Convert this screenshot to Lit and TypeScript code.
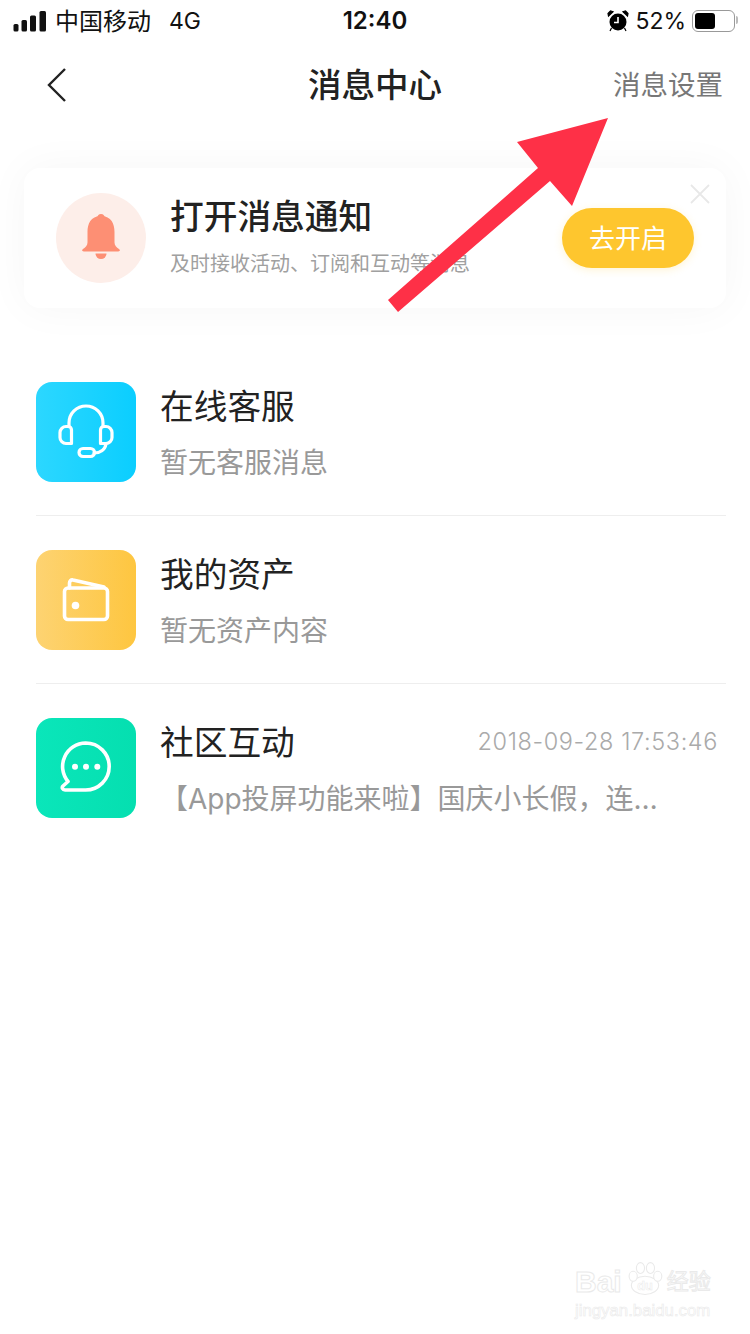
import { css, html, LitElement, svg } from 'lit';
import { customElement } from 'lit/decorators.js';

const headset = svg`
  <g fill="none" stroke="#fff" stroke-width="3.200" stroke-linecap="round" stroke-linejoin="round">
    <path d="M33 44v-3a17 17 0 0 1 34 0v3" />
    <path d="M32 44.500h-2a6 6 0 0 0-6 6v5a6 6 0 0 0 6 6h5.500V48c0-2-1.500-3.500-3.500-3.500z" />
    <path d="M68 44.500h2a6 6 0 0 1 6 6v5a6 6 0 0 1-6 6h-5.500V48c0-2 1.500-3.500 3.500-3.500z" />
    <path d="M58 71c6 0 11-3 12-9" />
    <rect x="43" y="66.500" width="15.500" height="8" rx="4" />
  </g>`;

const wallet = svg`
  <g fill="none" stroke="#fff" stroke-width="3.600" stroke-linecap="round" stroke-linejoin="round">
    <rect x="28.500" y="38" width="43" height="31.500" rx="3.500" />
    <path d="M33.500 38v-5c0-2 1.500-3.500 3.500-3l31 7" />
  </g>
  <circle cx="39.500" cy="55.500" r="3.800" fill="#fff" />`;

const chat = svg`
  <path d="M49.700 25a23.500 23.500 0 0 1 0 47H29c-2.500 0-3.500-2.500-2-4l5-4.500A23.500 23.500 0 0 1 49.700 25z"
    fill="none" stroke="#fff" stroke-width="3.600" stroke-linejoin="round" />
  <circle cx="39" cy="48.700" r="3" fill="#fff" />
  <circle cx="50" cy="48.700" r="3" fill="#fff" />
  <circle cx="61.300" cy="48.700" r="3" fill="#fff" />`;

const rows = [
  { tile: 'blue', icon: headset, title: '在线客服', sub: '暂无客服消息', date: '' },
  { tile: 'yellow', icon: wallet, title: '我的资产', sub: '暂无资产内容', date: '' },
  { tile: 'green', icon: chat, title: '社区互动', sub: '【App投屏功能来啦】国庆小长假，连…', date: '2018-09-28 17:53:46' },
];

@customElement('app-root')
export class AppRoot extends LitElement {
  static override styles = css`
    :host {
      display: block;
      position: relative;
      width: 750px;
      height: 1334px;
      overflow: hidden;
      background: #fff;
      color: #222;
      font-family: Inter, 'Noto Sans CJK SC', sans-serif;
    }
    .status {
      display: grid;
      grid-template-columns: 1fr auto 1fr;
      align-items: center;
      height: 41px;
      padding: 0 13px;
      font-size: 24px;
      color: #111;
    }
    .status-left, .status-right {
      display: flex;
      align-items: center;
    }
    .status-right {
      justify-content: flex-end;
      padding-right: 2px;
    }
    .signal { margin-right: 9px; }
    .carrier { margin-top: -2px; }
    .net { margin-left: 18px; font-size: 23px; }
    .time { font-weight: 600; font-size: 24px; }
    .alarm { margin-right: 6px; }
    .percent { font-size: 23px; }
    .battery {
      box-sizing: border-box;
      width: 43px;
      height: 22px;
      margin-left: 6px;
      padding: 2px;
      border: 1.5px solid #999;
      border-radius: 6px;
      position: relative;
    }
    .battery::after {
      content: '';
      position: absolute;
      right: -4px;
      top: 5px;
      width: 2px;
      height: 8px;
      border-radius: 0 2px 2px 0;
      background: #bbb;
    }
    .battery-fill {
      width: 20px;
      height: 100%;
      border-radius: 3px;
      background: #000;
    }
    .nav {
      display: grid;
      grid-template-columns: 1fr auto 1fr;
      align-items: center;
      height: 87px;
      padding: 0 27px;
    }
    .back { display: block; margin-left: 19px; }
    .nav-title { margin-bottom: 4px; font-size: 33.500px; font-weight: 500; }
    .nav-action { margin-bottom: 4px; justify-self: end; font-size: 27.500px; color: #777; }
    .card {
      display: flex;
      align-items: center;
      position: relative;
      height: 140px;
      margin: 40px 24px 0;
      padding: 0 32px;
      border-radius: 16px;
      background: #fff;
      box-shadow: 0 0 44px rgba(0, 0, 0, 0.04);
    }
    .bell {
      display: flex;
      align-items: center;
      justify-content: center;
      flex: none;
      width: 90px;
      height: 90px;
      border-radius: 50%;
      background: #fdeee9;
    }
    .card-text { flex: 1; margin-left: 24px; padding-bottom: 6px; }
    .card-title { font-size: 33.700px; font-weight: 500; line-height: 48px; }
    .card-sub { margin-top: 9px; font-size: 20px; line-height: 28px; color: #a0a0a0; }
    .open {
      flex: none;
      width: 132px;
      height: 60px;
      border-radius: 30px;
      background: #fec62e;
      box-shadow: 0 2px 8px rgba(254, 198, 46, 0.2);
      color: #fff;
      font-size: 26px;
      line-height: 62px;
      text-align: center;
    }
    .close { position: absolute; top: 15px; right: 15px; }
    .list { margin: 40px 24px 0 36px; }
    .row {
      display: flex;
      height: 100px;
      padding: 34px 0 33px;
      border-bottom: 1px solid #eee;
    }
    .row:last-child { border-bottom: none; }
    .tile {
      flex: none;
      width: 100px;
      height: 100px;
      border-radius: 16px;
    }
    .tile svg { display: block; }
    .blue { background: linear-gradient(90deg, #2cd7ff, #0bceff); }
    .yellow { background: linear-gradient(90deg, #fdd372, #fec640); }
    .green { background: linear-gradient(90deg, #0ae6ba, #05dfb0); }
    .row-body { flex: 1; min-width: 0; margin: -3px 0 0 24px; padding-right: 8px; }
    .row-top {
      display: flex;
      align-items: center;
      justify-content: space-between;
      height: 50px;
    }
    .row-title { font-size: 33.700px; }
    .row-date { margin-top: 2px; font-size: 23.500px; font-weight: 300; letter-spacing: 0.6px; color: #aaa; }
    .row-sub { margin-top: 12px; font-size: 28px; line-height: 44px; color: #999; white-space: nowrap; }
    .arrow { position: absolute; left: 0; top: 0; }
    .mark {
      position: absolute;
      left: 575px;
      top: 1260px;
      width: 140px;
      color: #fff;
      font-family: 'Liberation Sans', 'Noto Sans CJK SC', sans-serif;
      -webkit-text-stroke: 1px #eaeaea;
    }
    .mark-top {
      display: flex;
      align-items: flex-end;
      height: 38px;
      font-size: 30px;
      font-weight: 700;
      line-height: 32px;
    }
    .mark-paw { flex: none; margin-left: 3px; }
    .mark-cn { font-size: 22px; font-weight: 400; margin-left: 2px; }
    .mark-url {
      margin-top: 4px;
      font-size: 16.800px;
      line-height: 18px;
      white-space: nowrap;
      -webkit-text-stroke: 0.6px #eaeaea;
    }
  `;

  override render() {
    return html`
      <div class="status">
        <div class="status-left">
          <svg class="signal" width="33" height="22" viewBox="0 0 33 22" fill="#111">
            <rect x="0.500" y="14" width="5" height="7.500" rx="1.500" />
            <rect x="8.500" y="10" width="5.500" height="11.500" rx="1.500" />
            <rect x="17" y="5.500" width="6" height="16" rx="1.500" />
            <rect x="26.500" y="1" width="6.500" height="20.500" rx="1.500" />
          </svg>
          <span class="carrier">中国移动</span>
          <span class="net">4G</span>
        </div>
        <div class="time">12:40</div>
        <div class="status-right">
          <svg class="alarm" width="22" height="22" viewBox="0 0 22 22">
            <circle cx="11" cy="12" r="8.500" fill="#000" />
            <path d="M11 7v5.500H7" fill="none" stroke="#fff" stroke-width="1.600" />
            <path d="M1.500 6 6 1.800 3.500 1 1 3.500zM20.500 6 16 1.800 18.500 1 21 3.500zM4.500 18 3 21M17.500 18 19 21" fill="#000" stroke="#000" stroke-width="1.200" />
          </svg>
          <span class="percent">52%</span>
          <div class="battery"><div class="battery-fill"></div></div>
        </div>
      </div>

      <div class="nav">
        <svg class="back" width="24" height="36" viewBox="0 0 24 36" fill="none" stroke="#222" stroke-width="2.400">
          <path d="M19 2 3 18l16 16" />
        </svg>
        <div class="nav-title">消息中心</div>
        <div class="nav-action">消息设置</div>
      </div>

      <div class="card">
        <div class="bell">
          <svg width="38" height="48" viewBox="0 0 38 48" fill="#fd8f74">
            <circle cx="19" cy="3.500" r="3.500" />
            <path d="M19 2C8.500 2 5.500 10 5.500 18v10.500c0 3-2 5-4.500 6.500-1.500 1-1 2.500.8 2.500h34.400c1.800 0 2.300-1.500.8-2.500-2.500-1.500-4.500-3.500-4.500-6.500V18C32.500 10 29.500 2 19 2z" />
            <path d="M13.500 39.500h11a5.500 5.500 0 0 1-11 0z" />
          </svg>
        </div>
        <div class="card-text">
          <div class="card-title">打开消息通知</div>
          <div class="card-sub">及时接收活动、订阅和互动等消息</div>
        </div>
        <div class="open">去开启</div>
        <svg class="close" width="22" height="22" viewBox="0 0 22 22" stroke="#e8e8e8" stroke-width="1.800">
          <path d="M2 2l18 18M20 2 2 20" />
        </svg>
      </div>

      <div class="list">
        ${rows.map((row) => html`
          <div class="row">
            <div class="tile ${row.tile}">
              <svg width="100" height="100" viewBox="0 0 100 100">${row.icon}</svg>
            </div>
            <div class="row-body">
              <div class="row-top">
                <span class="row-title">${row.title}</span>
                ${row.date ? html`<span class="row-date">${row.date}</span>` : ''}
              </div>
              <div class="row-sub">${row.sub}</div>
            </div>
          </div>
        `)}
      </div>

      <svg class="arrow" width="750" height="340" viewBox="0 0 750 340">
        <path d="M608 118 517 142 538 168 388 300 398 312 550 181 572 206z" fill="#fe3047" />
      </svg>

      <div class="mark">
        <div class="mark-top">
          <span>Bai</span>
          <svg class="mark-paw" width="40" height="38" viewBox="0 0 44 38" fill="#fff" stroke="#eaeaea" stroke-width="1.200">
            <ellipse cx="22" cy="26" rx="15" ry="10" />
            <ellipse cx="9" cy="16" rx="4.500" ry="5.500" />
            <ellipse cx="17" cy="7" rx="4.500" ry="6" />
            <ellipse cx="28" cy="7" rx="4.500" ry="6" />
            <ellipse cx="36" cy="16" rx="4.500" ry="5.500" />
            <text x="22" y="31" font-size="14" text-anchor="middle" stroke-width="0.600">du</text>
          </svg>
          <span class="mark-cn">经验</span>
        </div>
        <div class="mark-url">jingyan.baidu.com</div>
      </div>
    `;
  }
}

declare global {
  interface HTMLElementTagNameMap {
    'app-root': AppRoot;
  }
}
